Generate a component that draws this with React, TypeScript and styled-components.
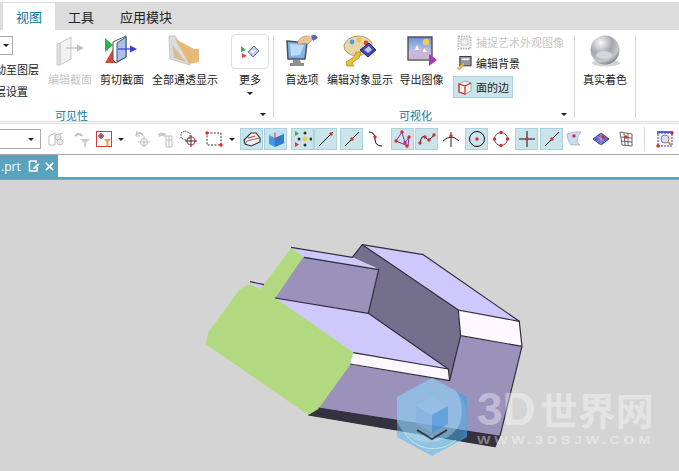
import styled, { createGlobalStyle } from 'styled-components'

const GlobalStyle = createGlobalStyle`
  html, body {
    margin: 0;
    padding: 0;
    background: #fff;
  }
`

const Page = styled.div`
  display: flex;
  flex-direction: column;
  width: 679px;
  height: 471px;
  overflow: hidden;
  background: #fff;
  font-family: 'Noto Sans CJK SC', 'Liberation Sans', sans-serif;
  font-size: 11px;
  color: #222;
`

const TabStrip = styled.div`
  display: flex;
  height: 28px;
  margin-top: 2px;
  padding-left: 3px;
  background: #dcdcdc;
`

const MenuTab = styled.div<{ $active?: boolean }>`
  display: flex;
  align-items: center;
  padding: 0 13px;
  margin-top: 1px;
  font-size: 13px;
  color: ${p => (p.$active ? '#0a78a0' : '#222')};
  background: ${p => (p.$active ? '#fff' : 'transparent')};
`

const Ribbon = styled.div`
  display: flex;
  height: 92px;
  border-bottom: 1px solid #ddd;
  box-sizing: border-box;
`

const Group = styled.div<{ $w: number }>`
  position: relative;
  display: flex;
  flex-direction: column;
  width: ${p => p.$w}px;
  height: 83px;
  margin-top: 5px;
  box-sizing: border-box;
  border-right: 1px solid #d8d8d8;
`

const GroupBody = styled.div`
  display: flex;
  flex: 1;
`

const GroupFooter = styled.div<{ $pl: number }>`
  display: flex;
  justify-content: space-between;
  align-items: center;
  height: 17px;
  margin-bottom: -5px;
  padding-left: ${p => p.$pl}px;
  padding-right: 7px;
  color: #0a78a0;
  font-size: 11px;
`

const Caret = styled.span`
  display: inline-block;
  width: 0;
  height: 0;
  border-left: 3.5px solid transparent;
  border-right: 3.5px solid transparent;
  border-top: 3.5px solid #222;
`

const ClipColumn = styled.div`
  display: flex;
  flex-direction: column;
  align-items: flex-end;
  width: 39px;
  margin-right: 5px;
  overflow: hidden;
  white-space: nowrap;
`

const LayerSelect = styled.div`
  display: flex;
  align-items: center;
  justify-content: flex-end;
  align-self: flex-start;
  width: 13px;
  height: 19px;
  margin-top: 1px;
  padding-right: 3px;
  box-sizing: border-box;
  border: 1px solid #aaa;
  border-left: none;
`

const LayerText = styled.div<{ $w: number; $mt: number }>`
  align-self: flex-start;
  width: ${p => p.$w}px;
  margin-top: ${p => p.$mt}px;
  line-height: 16px;
  direction: rtl;
  overflow: hidden;
`

const BigButton = styled.div<{ $w: number; $dim?: boolean }>`
  display: flex;
  flex-direction: column;
  align-items: center;
  width: ${p => p.$w}px;
  white-space: nowrap;
  color: ${p => (p.$dim ? '#c6c6c6' : '#222')};
  svg {
    display: block;
    height: 32px;
  }
`

const BigLabel = styled.div`
  margin-top: 4px;
  line-height: 16px;
`

const MoreButton = styled.div`
  display: flex;
  flex-direction: column;
  align-items: center;
  width: 38px;
  margin-left: 9px;
`

const MoreBox = styled.div`
  display: flex;
  align-items: center;
  justify-content: center;
  width: 38px;
  height: 35px;
  margin-top: -1px;
  margin-bottom: -2px;
  box-sizing: border-box;
  border: 1px solid #ddd;
  border-radius: 4px;
`

const MoreCaret = styled(Caret)`
  margin-top: 5px;
`

const SmallStack = styled.div`
  display: flex;
  flex-direction: column;
  width: 120px;
  white-space: nowrap;
`

const SmallRow = styled.div<{ $dim?: boolean; $on?: boolean; $mt: number }>`
  display: flex;
  align-items: center;
  gap: 4px;
  height: 22px;
  width: ${p => (p.$on ? '60px' : 'auto')};
  margin-top: ${p => p.$mt}px;
  padding-left: 3px;
  box-sizing: border-box;
  color: ${p => (p.$dim ? '#c6c6c6' : '#222')};
  background: ${p => (p.$on ? '#cbe4ec' : 'transparent')};
  border: 1px solid ${p => (p.$on ? '#a9d3df' : 'transparent')};
`

const Toolbar = styled.div`
  display: flex;
  align-items: center;
  height: 32px;
  margin-top: 1px;
  border-top: 1px solid #e0e0e0;
  border-bottom: 1px solid #a8a8a8;
  box-sizing: border-box;
`

const ToolSelect = styled.div`
  display: flex;
  align-items: center;
  justify-content: flex-end;
  width: 41px;
  height: 20px;
  padding-right: 6px;
  box-sizing: border-box;
  border: 1px solid #aaa;
  border-left: none;
  flex: none;
`

const Tool = styled.div<{ $ml: number; $on?: boolean }>`
  display: flex;
  flex: none;
  align-items: center;
  justify-content: center;
  width: ${p => (p.$on ? '23px' : '22px')};
  height: 22px;
  margin-left: ${p => p.$ml}px;
  margin-right: ${p => (p.$on ? '-1px' : '0')};
  box-sizing: border-box;
  background: ${p => (p.$on ? '#cbe4ec' : 'transparent')};
  border: ${p => (p.$on ? '1px solid #a9d3df' : 'none')};
`

const ToolCaret = styled(Caret)<{ $ml: number }>`
  flex: none;
  margin-left: ${p => p.$ml + 1}px;
  margin-right: 1px;
`

const ToolDivider = styled.div`
  flex: none;
  width: 1px;
  height: 24px;
  margin-left: 7px;
  background: #d8d8d8;
`

const DocBar = styled.div`
  display: flex;
  height: 22px;
  background: #fff;
  border-bottom: 2px solid #5aa3bd;
  box-sizing: content-box;
`

const DocTab = styled.div`
  display: flex;
  align-items: center;
  width: 58px;
  padding-left: 1px;
  box-sizing: border-box;
  background: #5aa3bd;
  color: #fff;
  font-family: 'Open Sans', 'Liberation Sans', sans-serif;
  font-size: 12px;
`

const DocIcons = styled.div`
  display: flex;
  align-items: center;
  gap: 5px;
  margin-left: 7px;
`

const Viewport = styled.div`
  position: relative;
  flex: 1;
  background: #d4d4d4;
  border-top: 1px solid #e08a50;
  svg.model {
    display: block;
  }
`

const Watermark = styled.div`
  position: absolute;
  left: 396px;
  top: 197px;
  display: flex;
  align-items: center;
  gap: 9px;
`

const MarkText = styled.div`
  display: flex;
  flex-direction: column;
  color: rgba(255, 255, 255, 0.4);
`

const MarkTitle = styled.div`
  display: flex;
  align-items: center;
  gap: 4px;
  font-family: 'Noto Sans CJK SC', 'Liberation Sans', sans-serif;
  font-size: 38px;
  line-height: 42px;
  font-weight: 700;
  white-space: nowrap;
`

const MarkLatin = styled.span`
  font-family: 'Liberation Sans', sans-serif;
  font-size: 46px;
`

const MarkUrl = styled.div`
  font-family: 'Liberation Sans', sans-serif;
  font-size: 11px;
  line-height: 12px;
  font-weight: 700;
  letter-spacing: 2.8px;
  white-space: nowrap;
  margin-top: 4px;
  transform: scaleX(1.3);
  transform-origin: left center;
`

const RedDot = ({ x, y, r = 1.7 }: { x: number; y: number; r?: number }) => <circle cx={x} cy={y} r={r} fill="#d92b2b" />

const IconEditSection = () => (
  <svg width="34" height="32" viewBox="0 0 34 32">
    <path d="M7 8 L18 2 V24 L7 30Z" fill="#f2f2f2" stroke="#c8c8c8" />
    <path d="M4 9 L7 8 V30 L4 30Z" fill="#e4e4e4" stroke="#c8c8c8" />
    <path d="M13 13 H24" stroke="#c4c4c4" strokeWidth="1.4" />
    <path d="M24 9.5 L31 13 L24 16.5Z" fill="#c0c0c0" />
  </svg>
)

const IconCutSection = () => (
  <svg width="36" height="32" viewBox="0 0 36 32">
    <path d="M1 3 L9 10 L1 17Z" fill="#2fb34a" />
    <path d="M9 14 L12 28 H1Z" fill="#d9483b" />
    <path d="M9 7 L22 1 V22 L12 28 L9 25Z" fill="#fff" stroke="#555" />
    <path d="M13 8 L22 2 V22 L13 27Z" fill="#a9c0ea" stroke="#3f4f7a" />
    <path d="M14 14 H27" stroke="#3a3ad0" strokeWidth="1.2" />
    <path d="M26 10.5 L33 14 L26 17.5Z" fill="#3a3ad8" />
  </svg>
)

const IconShowAll = () => (
  <svg width="36" height="32" viewBox="0 0 36 32">
    <path d="M2 1 H8 L20 18 L23 30 L7 25 L3 24Z" fill="#dcdcdc" stroke="#c4c4c4" />
    <path d="M8 4 L27 14 H32 V27 L22 29 L15 16Z" fill="#e8b877" />
    <path d="M5 9 L19 27 L7 23Z" fill="#d9bd9a" />
  </svg>
)

const IconMore = () => (
  <svg width="20" height="14" viewBox="0 0 20 14">
    <path d="M1 1 L6 5 L1 7Z" fill="#2fb34a" />
    <path d="M2 8 L7 11 L2 13Z" fill="#d9483b" />
    <path d="M8 7 L14 1 L19 6 L13 12Z" fill="#b8c3e8" stroke="#6a77aa" />
    <path d="M10 7 L14 4 L16 6 L13 9Z" fill="#e8ecf8" />
  </svg>
)

const IconPrefs = () => (
  <svg width="34" height="32" viewBox="0 0 34 32">
    <path d="M2 6 L22 8 L20 24 L3 24Z" fill="#7fb2e6" stroke="#4a4f5a" strokeWidth="1.5" />
    <path d="M5 9 L19 10 L15 20 L6 21Z" fill="#bcdcf5" />
    <path d="M8 25 H15 L16 28 H19 V31 H5 V28 H8Z" fill="#8d8f94" />
    <path d="M13 6 Q17 0 24 1 L28 4 L23 9 Q18 7 13 10Z" fill="#eac29a" stroke="#bd9670" strokeWidth=".6" />
    <path d="M26 1 L30 -1 L33 3 L28 6Z" fill="#5a62c4" />
  </svg>
)

const IconPalette = () => (
  <svg width="36" height="32" viewBox="0 0 36 32">
    <path d="M2 10 Q5 2 16 1 Q26 1 30 8 L30 14 L20 20 Q10 22 6 18 Q1 15 2 10Z" fill="#e9d6a8" stroke="#b39a66" />
    <circle cx="10" cy="7" r="2.4" fill="#3fa0e8" />
    <circle cx="17" cy="5" r="2.4" fill="#e8c93a" />
    <circle cx="24" cy="8" r="2.4" fill="#d8473a" />
    <path d="M18 15 L27 8 L34 15 L26 22Z" fill="#3e48b4" stroke="#20286e" />
    <path d="M22 15 L27 11 L30 15 L26 18Z" fill="#bcc6f0" />
    <path d="M4 27 L12 22 L14 17 L19 17 L17 23 L10 28 L12 31 L5 31Z" fill="#e8bf3c" stroke="#a58220" strokeWidth=".7" />
  </svg>
)

const IconExport = () => (
  <svg width="34" height="32" viewBox="0 0 34 32">
    <defs>
      <linearGradient id="sky" x1="0" y1="0" x2="0" y2="1">
        <stop offset="0" stopColor="#6d8fd8" />
        <stop offset="1" stopColor="#dfe6f6" />
      </linearGradient>
    </defs>
    <rect x="3" y="2" width="24" height="23" fill="url(#sky)" stroke="#444" strokeWidth="1.3" />
    <circle cx="21" cy="7" r="3.2" fill="#f0d040" />
    <path d="M4 19 L12 10 L17 14 L22 12 L26 18 V24 H4Z" fill="#c9b8d8" />
    <path d="M12 10 L14 15 L10 15Z M19 13 L22 17 L18 17Z" fill="#fff" />
    <path d="M24 19 L32 25 L24 31Z" fill="#a838b8" />
  </svg>
)

const IconSphere = () => (
  <svg width="32" height="32" viewBox="0 0 32 32">
    <defs>
      <radialGradient id="ball" cx=".35" cy=".25" r=".8">
        <stop offset="0" stopColor="#fafafa" />
        <stop offset=".5" stopColor="#a4a6ac" />
        <stop offset=".8" stopColor="#c4c6ca" />
        <stop offset="1" stopColor="#77797f" />
      </radialGradient>
    </defs>
    <ellipse cx="17" cy="28" rx="14" ry="3.5" fill="#d4d4d4" />
    <circle cx="16" cy="15" r="14.5" fill="url(#ball)" />
    <ellipse cx="15" cy="20" rx="8" ry="4" fill="#d6d7da" />
  </svg>
)

const IconCapture = () => (
  <svg width="15" height="15" viewBox="0 0 15 15">
    <rect x="1.5" y="1.5" width="12" height="12" fill="none" stroke="#b8b8b8" strokeWidth="2" strokeDasharray="1.5 1" />
    <rect x="4" y="4" width="7" height="6" fill="#eee" stroke="#c4c4c4" />
  </svg>
)

const IconEditBg = () => (
  <svg width="15" height="16" viewBox="0 0 16 16">
    <rect x="3" y="1" width="12" height="10" fill="#8f97a8" stroke="#333" />
    <rect x="5" y="3" width="8" height="2" fill="#eef" />
    <path d="M0 14 L5 9 L6 7 L8 8 L7 11 L3 15Z" fill="#e8bf3c" stroke="#a58220" strokeWidth=".5" />
  </svg>
)

const IconFaceEdge = () => (
  <svg width="15" height="15" viewBox="0 0 15 15">
    <path d="M2 4 L8 1 L14 3 V11 L8 14 L2 12Z" fill="#f4f4f4" stroke="#888" strokeWidth=".7" />
    <path d="M2 4 L8 6 V14 L2 12Z M8 6 L14 3" fill="none" stroke="#d8331f" strokeWidth="1.3" />
  </svg>
)

// small 18x18 tools, red dot plus black strokes
const T = ({ children }: { children: React.ReactNode }) => (
  <svg width="18" height="18" viewBox="0 0 18 18">
    {children}
  </svg>
)

const gray = '#bdbdbd'

const toolIcons = {
  filterGroup: (
    <T>
      <path d="M2 6 L8 3 V15 L2 15Z M9 5 L16 3" fill="none" stroke={gray} />
      <circle cx="11" cy="7" r="3" fill="#e8e8e8" stroke={gray} />
      <circle cx="13" cy="12" r="3" fill="#e8e8e8" stroke={gray} />
    </T>
  ),
  undoFilter: (
    <T>
      <path d="M2 6 Q6 2 9 6" fill="none" stroke={gray} strokeWidth="2" />
      <path d="M7 9 H17 L13 13 V17 L11 16 V13Z" fill="#ccc" />
    </T>
  ),
  redFilter: (
    <T>
      <rect x="1.5" y="1.5" width="15" height="15" fill="#fff" stroke="#d8383c" strokeWidth="1" />
      <path d="M6 3 V9 M3 6 H9" stroke="#333" />
      <circle cx="6" cy="6" r="2" fill="none" stroke="#d8383c" />
      <path d="M9 9 H16 L13.5 12 V16 L11.5 16 V12Z" fill="#e8a92c" />
    </T>
  ),
  rotate: (
    <T>
      <path d="M3 5 Q8 0 10 6" fill="none" stroke={gray} strokeWidth="1.4" />
      <path d="M4 1 L3 6 L7 6" fill="none" stroke={gray} />
      <circle cx="11" cy="12" r="3.5" fill="none" stroke={gray} />
      <path d="M11 6 V17 M5 12 H17" stroke={gray} />
    </T>
  ),
  partFilter: (
    <T>
      <path d="M2 4 Q6 1 10 4 L9 7 Q5 5 3 7Z" fill="#c8c8c8" />
      <path d="M10 6 H16 V17 H10Z M10 10 H16 M13 6 V17" fill="none" stroke={gray} />
    </T>
  ),
  dashCircle: (
    <T>
      <path d="M5 1 L10 3 V8 L5 10 L1 8 V3Z" fill="none" stroke="#555" strokeDasharray="1.5 1" />
      <circle cx="11" cy="11" r="4" fill="none" stroke="#d8383c" strokeWidth="1.2" />
      <path d="M11 5 V17 M5 11 H17" stroke="#333" />
    </T>
  ),
  dashRect: (
    <T>
      <rect x="2" y="3" width="14" height="12" fill="none" stroke="#333" strokeDasharray="2 1.4" />
      <RedDot x={2} y={3} />
      <RedDot x={16} y={15} />
    </T>
  ),
  sketchBox: (
    <T>
      <path d="M1 10 L8 3 H13 L17 8 V12 L8 16 L2 14Z" fill="#f0f0f0" stroke="#333" strokeWidth="1.1" />
      <path d="M5 8 L12 6" stroke="#d8383c" strokeWidth="1.2" />
      <path d="M2 14 L4 11 L16 8" fill="none" stroke="#555" strokeWidth=".8" />
    </T>
  ),
  blueBox: (
    <T>
      <path d="M2 5 L11 1 L17 4 V13 L8 17 L2 14Z" fill="#3f9be8" />
      <path d="M2 5 L11 1 L17 4 L8 8Z" fill="#bfe0f8" />
      <path d="M8 8 L17 4 V13 L8 17Z" fill="#2c7fd0" />
      <path d="M8 3 V9 L13 7" fill="none" stroke="#d8383c" />
    </T>
  ),
  snapAll: (
    <T>
      <path d="M1 1 L5 3.5 L1 6Z" fill="#2fb34a" />
      <path d="M1 12 L5 14.5 L1 17Z" fill="#d8383c" />
      <circle cx="11" cy="9" r="2.4" fill="#e8d03a" />
      <circle cx="11" cy="3" r="1.5" fill="#333" />
      <circle cx="17" cy="9" r="1.5" fill="#333" />
      <circle cx="11" cy="15" r="1.5" fill="#333" />
      <circle cx="5" cy="9" r="1.5" fill="#333" />
    </T>
  ),
  endLine: (
    <T>
      <path d="M2 16 L16 2" stroke="#111" />
      <RedDot x={14} y={4} />
    </T>
  ),
  midLine: (
    <T>
      <path d="M2 16 L16 2" stroke="#111" />
      <RedDot x={9} y={9} />
    </T>
  ),
  curve: (
    <T>
      <path d="M3 2 Q9 2 9 9 Q9 16 16 16" fill="none" stroke="#111" />
      <RedDot x={9} y={7} />
    </T>
  ),
  polyPts: (
    <T>
      <path d="M2 11 L8 2 L11 13 L15 7 L14 16 Z" fill="none" stroke="#8a2bb0" />
      <RedDot x={2} y={11} />
      <RedDot x={8} y={2} />
      <RedDot x={11} y={13} />
      <RedDot x={15} y={7} />
      <RedDot x={13} y={16} />
    </T>
  ),
  splinePts: (
    <T>
      <path d="M2 13 Q4 3 8 8 Q11 12 16 5" fill="none" stroke="#222" />
      <RedDot x={2} y={13} />
      <RedDot x={7} y={7} />
      <RedDot x={11} y={10} />
      <RedDot x={16} y={5} />
    </T>
  ),
  crossArc: (
    <T>
      <path d="M1 11 Q9 3 17 11 M9 2 V17" fill="none" stroke="#222" />
      <RedDot x={9} y={6} />
    </T>
  ),
  centre: (
    <T>
      <circle cx="9" cy="9" r="7.5" fill="none" stroke="#111" />
      <RedDot x={9} y={9} />
    </T>
  ),
  quadrant: (
    <T>
      <circle cx="9" cy="9" r="6.5" fill="none" stroke="#555" />
      <RedDot x={9} y={2.5} />
      <RedDot x={15.5} y={9} />
      <RedDot x={9} y={15.5} />
      <RedDot x={2.5} y={9} />
    </T>
  ),
  cross: (
    <T>
      <path d="M9 1 V17 M1 9 H17" stroke="#111" />
      <RedDot x={9} y={9} />
    </T>
  ),
  face: (
    <T>
      <path d="M1 4 Q8 1 15 2 Q11 6 11 12 L14 15 H5 Q1 10 1 4Z" fill="#c8dcf2" stroke="#8d9cb8" strokeWidth=".6" />
      <RedDot x={8} y={6} />
    </T>
  ),
  mesh: (
    <T>
      <path d="M1 9 L9 3 L17 9 L9 15Z" fill="#6a66c8" stroke="#3c3a90" />
      <path d="M5 6 L13 12 M9 3 L9 15 M13 6 L5 12" stroke="#c8c8f0" strokeWidth=".6" />
      <RedDot x={11} y={7} />
    </T>
  ),
  grid: (
    <T>
      <path d="M3 2 L15 4 V16 L5 15Z M7 3 L8 15 M11 3.5 V15.5 M4 7 L15 8 M4 11 L15 12" fill="none" stroke="#444" strokeWidth=".8" />
      <RedDot x={9} y={7} />
    </T>
  ),
  zoomBox: (
    <T>
      <rect x="1" y="1" width="16" height="3" fill="#4a6ed0" />
      <rect x="2" y="3" width="14" height="13" fill="#f4f4f4" stroke="#3a3ad0" strokeDasharray="2 1" />
      <circle cx="9" cy="9" r="4" fill="#dde" stroke="#888" />
      <path d="M12 12 L15 15" stroke="#c8a23c" strokeWidth="2" />
      <RedDot x={2} y={16} />
      <RedDot x={16} y={3} />
    </T>
  ),
}

type ToolName = keyof typeof toolIcons

const tools: { icon: ToolName | 'caret'; ml: number; on?: boolean }[] = [
  { icon: 'filterGroup', ml: 4 },
  { icon: 'undoFilter', ml: 4 },
  { icon: 'redFilter', ml: 0 },
  { icon: 'caret', ml: 2 },
  { icon: 'rotate', ml: 6 },
  { icon: 'partFilter', ml: 1 },
  { icon: 'dashCircle', ml: 2 },
  { icon: 'dashRect', ml: 3 },
  { icon: 'caret', ml: 3 },
  { icon: 'sketchBox', ml: 4, on: true },
  { icon: 'blueBox', ml: 2, on: true },
  { icon: 'snapAll', ml: 5, on: true },
  { icon: 'endLine', ml: 1, on: true },
  { icon: 'midLine', ml: 4, on: true },
  { icon: 'curve', ml: 2 },
  { icon: 'polyPts', ml: 5, on: true },
  { icon: 'splinePts', ml: 2, on: true },
  { icon: 'crossArc', ml: 3 },
  { icon: 'centre', ml: 3, on: true },
  { icon: 'quadrant', ml: 3 },
  { icon: 'cross', ml: 3, on: true },
  { icon: 'midLine', ml: 3, on: true },
  { icon: 'face', ml: 2 },
  { icon: 'mesh', ml: 4 },
  { icon: 'grid', ml: 3 },
]

// faces of the part, in the coordinates of a 3x crop starting at (190, 235)
const faces: { d: string; fill: string }[] = [
  { d: '355,543 385,522 930,607 915,638', fill: '#35323f' },
  { d: '480,392 779,440 812,307 996,337 930,607 385,522', fill: '#9a92bb' },
  { d: '517,32 805,228 812,305 779,440 775,405 535,238 566,107 555,100 487,70', fill: '#736f8c' },
  { d: '517,32 700,62 988,262 805,228', fill: '#cfc8fc' },
  { d: '805,232 988,262 996,337 812,305', fill: '#fdf7ff' },
  { d: '303,40 487,70 558,103 340,68', fill: '#cfc8fc' },
  { d: '340,68 566,107 535,238 255,192', fill: '#9a92bb' },
  { d: '255,192 535,238 775,405 490,355', fill: '#cfc8fc' },
  { d: '490,358 775,405 779,440 480,390', fill: '#fdf7ff' },
  { d: '180,143 222,152 212,168', fill: '#cfc8fc' },
]

const edges = [
  '303,40 487,70 517,32 700,62 988,262 996,337 930,607 915,638 355,543',
  '517,32 805,228 988,262',
  '805,228 812,305 996,337',
  '812,305 779,440 480,390',
  '342,70 566,107 535,238 255,192',
  '535,238 775,405 779,440',
  '490,356 775,405',
  '385,522 930,607',
  '180,143 222,152',
]

const Model = () => (
  <svg className="model" width="679" height="290" viewBox="0 181 679 290">
    <g transform="translate(190 235) scale(0.3333)">
      {faces.map(f => (
        <polygon key={f.d} points={f.d} fill={f.fill} />
      ))}
      <polygon
        points="303,42 340,68 255,192 490,355 478,395 385,525 355,543 47,330 55,295 150,165 180,150 212,165"
        fill="#b1da80"
      />
      {edges.map(e => (
        <polyline key={e} points={e} fill="none" stroke="#2f2d38" strokeWidth="3.5" strokeLinejoin="round" />
      ))}
    </g>
  </svg>
)

const LogoMark = () => (
  <svg width="72" height="80" viewBox="0 0 72 80">
    <path d="M36 1 L71 20 V60 L36 79 L1 60 V20Z" fill="rgba(72,178,238,0.5)" />
    <path d="M36 1 L60 14 A36 36 0 0 1 62 50 A35 35 0 0 1 1 45 V20Z" fill="rgba(200,222,244,0.4)" />
    <path d="M36 1 L71 20 V60 L62 65 A36 36 0 0 0 60 14Z" fill="rgba(55,150,225,0.4)" />
    <path d="M21 53 L36 62 L51 53" fill="none" stroke="rgba(20,20,30,0.75)" strokeWidth="2" />
    <path d="M20 29 L36 20 L52 29 L36 38Z" fill="rgba(150,195,235,0.45)" />
    <path d="M20 29 L36 38 V56 L20 47Z" fill="rgba(130,175,228,0.5)" />
    <path d="M52 29 L36 38 V56 L52 47Z" fill="rgba(70,145,218,0.6)" />
    <path d="M8 55 A34 34 0 0 0 60 63" fill="none" stroke="rgba(255,255,255,0.5)" />
  </svg>
)

const App = () => {
  return (
    <Page>
      <GlobalStyle />
      <TabStrip>
        <MenuTab $active>视图</MenuTab>
        <MenuTab>工具</MenuTab>
        <MenuTab>应用模块</MenuTab>
      </TabStrip>
      <Ribbon>
        <Group $w={274}>
          <GroupBody>
            <ClipColumn>
              <LayerSelect>
                <Caret />
              </LayerSelect>
              <LayerText $w={39} $mt={6}>动至图层</LayerText>
              <LayerText $w={28} $mt={6}>层设置</LayerText>
            </ClipColumn>
            <BigButton $w={52} $dim>
              <IconEditSection />
              <BigLabel>编辑截面</BigLabel>
            </BigButton>
            <BigButton $w={52}>
              <IconCutSection />
              <BigLabel>剪切截面</BigLabel>
            </BigButton>
            <BigButton $w={74}>
              <IconShowAll />
              <BigLabel>全部通透显示</BigLabel>
            </BigButton>
            <MoreButton>
              <MoreBox>
                <IconMore />
              </MoreBox>
              <BigLabel>更多</BigLabel>
              <MoreCaret />
            </MoreButton>
          </GroupBody>
          <GroupFooter $pl={55}>
            <span>可见性</span>
            <Caret />
          </GroupFooter>
        </Group>
        <Group $w={301}>
          <GroupBody>
            <BigButton $w={56}>
              <IconPrefs />
              <BigLabel>首选项</BigLabel>
            </BigButton>
            <BigButton $w={60}>
              <IconPalette />
              <BigLabel>编辑对象显示</BigLabel>
            </BigButton>
            <BigButton $w={63}>
              <IconExport />
              <BigLabel>导出图像</BigLabel>
            </BigButton>
            <SmallStack>
              <SmallRow $dim $mt={-4}>
                <IconCapture />
                捕捉艺术外观图像
              </SmallRow>
              <SmallRow $mt={-1}>
                <IconEditBg />
                编辑背景
              </SmallRow>
              <SmallRow $on $mt={2}>
                <IconFaceEdge />
                面的边
              </SmallRow>
            </SmallStack>
          </GroupBody>
          <GroupFooter $pl={125}>
            <span>可视化</span>
            <Caret />
          </GroupFooter>
        </Group>
        <Group $w={61}>
          <GroupBody>
            <BigButton $w={61}>
              <IconSphere />
              <BigLabel>真实着色</BigLabel>
            </BigButton>
          </GroupBody>
        </Group>
      </Ribbon>
      <Toolbar>
        <ToolSelect>
          <Caret />
        </ToolSelect>
        {tools.map((t, i) =>
          t.icon === 'caret' ? (
            <ToolCaret key={i} $ml={t.ml} />
          ) : (
            <Tool key={i} $ml={t.ml} $on={t.on}>
              {toolIcons[t.icon]}
            </Tool>
          ),
        )}
        <ToolDivider />
        <Tool $ml={9}>{toolIcons.zoomBox}</Tool>
      </Toolbar>
      <DocBar>
        <DocTab>
          .prt
          <DocIcons>
            <svg width="12" height="12" viewBox="0 0 12 12">
              <path d="M1.5 1 H8 V3 M1.5 1 V11 H9 V7" fill="none" stroke="#fff" strokeWidth="1.6" />
              <path d="M5 8 L10 3 L11.5 4.5 L6.5 9 H5Z" fill="#fff" />
            </svg>
            <svg width="9" height="9" viewBox="0 0 10 10">
              <path d="M1 1 L9 9 M9 1 L1 9" stroke="#fff" strokeWidth="2" />
            </svg>
          </DocIcons>
        </DocTab>
      </DocBar>
      <Viewport>
        <Model />
        <Watermark>
          <LogoMark />
          <MarkText>
            <MarkTitle>
              <MarkLatin>3D</MarkLatin>
              世界网
            </MarkTitle>
            <MarkUrl>WWW.3DSJW.COM</MarkUrl>
          </MarkText>
        </Watermark>
      </Viewport>
    </Page>
  )
}

export default App
